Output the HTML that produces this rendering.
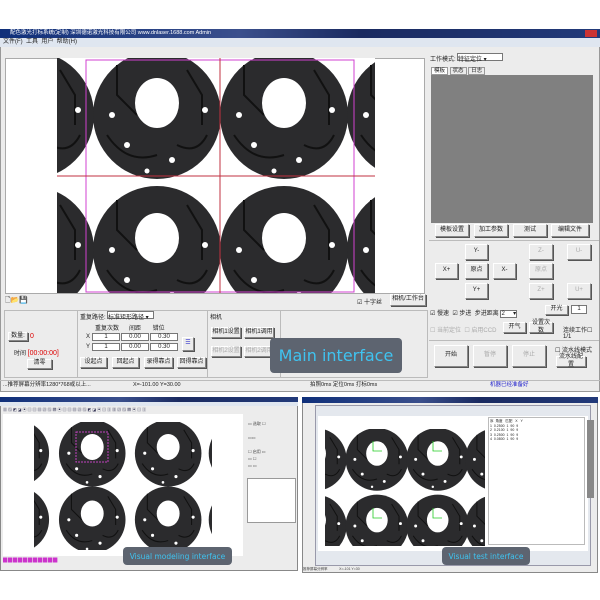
<!DOCTYPE html>
<html><head><meta charset="utf-8">
<style>
*{box-sizing:border-box;margin:0;padding:0}
body{width:600px;height:600px;background:#fff;position:relative;overflow:hidden;font-family:"Liberation Sans","Noto Sans CJK SC",sans-serif;font-size:6px;color:#222}
.a{position:absolute}
.btn{position:absolute;background:#ececec;border:1px solid #888;border-top-color:#fff;border-left-color:#fff;box-shadow:1px 1px 0 #555;font-size:6px;text-align:center;line-height:1.2;display:flex;align-items:center;justify-content:center}
.dis{color:#aaa}
.inp{position:absolute;background:#fff;border:1px solid #777;font-size:6px;text-align:center}
.title{background:linear-gradient(90deg,#0f2f7a,#3a4f8c 40%,#1a2a60 60%,#223a7a);color:#fff}
.lab{position:absolute;background:#5d6470;border-radius:4px;color:#3fc3f0;display:flex;align-items:center;justify-content:center;font-family:"DejaVu Sans",sans-serif}
</style></head><body>
<svg width="0" height="0" style="position:absolute">
<defs>
<g id="d">
<circle r="64" fill="#2b2b2d"/>
<path d="M-40,-50 L-40,-20 L-20,0 M30,-45 L45,-20 L45,10 M-50,20 Q-30,50 0,40 M20,30 Q40,40 50,20" stroke="#111" stroke-width="2" fill="none"/>
<ellipse cx="0" cy="-12" rx="22" ry="25" fill="#fff"/>
<circle cx="-45" cy="0" r="3" fill="#fff"/><circle cx="48" cy="-5" r="3" fill="#fff"/>
<circle cx="-30" cy="30" r="3" fill="#fff"/><circle cx="15" cy="45" r="3" fill="#fff"/><circle cx="-10" cy="56" r="2.5" fill="#fff"/>
</g>
</defs></svg>

<!-- Main window -->
<div class="a" style="left:0;top:29px;width:600px;height:363px;background:#ececec;border:1px solid #999"></div>
<div class="a title" style="left:0;top:29px;width:600px;height:9px;font-size:5.5px;line-height:9px;padding-left:10px">配色激光打标系统(定制) 深圳德诺激光科技有限公司 www.dnlaser.1688.com Admin</div>
<div class="a" style="left:585px;top:30px;width:12px;height:7px;background:#c33"></div>
<div class="a" style="left:0;top:38px;width:600px;height:9px;background:#dfe6f0;font-size:6px;line-height:9px;padding-left:3px">文件(F)&nbsp;&nbsp;工具&nbsp;&nbsp;用户&nbsp;&nbsp;帮助(H)</div>
<div class="a" style="left:5px;top:58px;width:420px;height:236px;background:#fff;border:1px solid #aaa"></div>
<svg class="a" style="left:57px;top:58px" width="318" height="235" viewBox="0 0 318 235">
<rect width="318" height="235" fill="#fff"/>
<use href="#d" x="-27" y="57"/><use href="#d" x="100" y="57"/><use href="#d" x="227" y="57"/><use href="#d" x="354" y="57"/>
<use href="#d" x="-27" y="192"/><use href="#d" x="100" y="192"/><use href="#d" x="227" y="192"/><use href="#d" x="354" y="192"/>
<rect x="29" y="2" width="268" height="232" fill="none" stroke="#d040d0" stroke-width="1"/>
<line x1="0" y1="118" x2="318" y2="118" stroke="#c03040"/><line x1="163" y1="0" x2="163" y2="235" stroke="#c03040"/>
</svg>
<div class="a" style="left:5px;top:296px;width:30px;height:8px;font-size:7px">🗋📂💾</div>
<div class="a" style="left:357px;top:297px">☑ 十字丝</div>
<div class="btn" style="left:390px;top:294px;width:36px;height:12px">相机/工作台</div>
<div class="a" style="left:4px;top:310px;width:424px;height:68px;border:1px solid #bbb"></div>
<div class="a" style="left:77px;top:310px;width:1px;height:68px;background:#bbb"></div>
<div class="a" style="left:207px;top:310px;width:1px;height:68px;background:#bbb"></div>
<div class="a" style="left:280px;top:310px;width:1px;height:68px;background:#bbb"></div>
<div class="btn" style="left:8px;top:332px;width:20px;height:9px">数量:</div><div class="a" style="left:30px;top:333px;color:#d00;font-size:7px">0</div>
<div class="a" style="left:14px;top:348px">时间 <span style="color:#d00;font-size:7px">[00:00:00]</span></div>
<div class="btn" style="left:27px;top:359px;width:25px;height:10px">清零</div>
<div class="a" style="left:80px;top:312px">重复路径:</div><div class="inp" style="left:107px;top:311px;width:47px;height:8px;text-align:left">标准矩形路径 ▾</div>
<div class="a" style="left:95px;top:323px">重复次数&nbsp;&nbsp;&nbsp;&nbsp;&nbsp;&nbsp;间距&nbsp;&nbsp;&nbsp;&nbsp;&nbsp;&nbsp;&nbsp;错位</div>
<div class="a" style="left:86px;top:334px">X</div><div class="a" style="left:86px;top:344px">Y</div>
<div class="inp" style="left:92px;top:333px;width:28px;height:8px">1</div><div class="inp" style="left:121px;top:333px;width:28px;height:8px">0.00</div><div class="inp" style="left:150px;top:333px;width:28px;height:8px">0.30</div>
<div class="inp" style="left:92px;top:343px;width:28px;height:8px">1</div><div class="inp" style="left:121px;top:343px;width:28px;height:8px">0.00</div><div class="inp" style="left:150px;top:343px;width:28px;height:8px">0.30</div>
<div class="btn" style="left:182px;top:337px;width:12px;height:14px;color:#33c">☰</div>
<div class="btn" style="left:80px;top:357px;width:27px;height:11px">设起点</div><div class="btn" style="left:112px;top:357px;width:27px;height:11px">回起点</div><div class="btn" style="left:144px;top:357px;width:29px;height:11px">录得靠点</div><div class="btn" style="left:177px;top:357px;width:29px;height:11px">回得靠点</div>
<div class="a" style="left:210px;top:312px">相机</div>
<div class="btn" style="left:211px;top:327px;width:30px;height:11px">相机1设置</div><div class="btn" style="left:244px;top:327px;width:30px;height:11px">相机1调用</div>
<div class="btn dis" style="left:211px;top:346px;width:30px;height:11px">相机2设置</div><div class="btn dis" style="left:244px;top:346px;width:30px;height:11px">相机2调用</div>
<div class="a" style="left:0;top:380px;width:600px;height:10px;border-top:1px solid #bbb;font-size:5.5px;line-height:9px">
<span class="a" style="left:3px">...推荐屏幕分辨率1280*768或以上...</span><span class="a" style="left:133px">X=-101.00 Y=30.00</span><span class="a" style="left:310px">拍照0ms 定位0ms 打标0ms</span><span class="a" style="left:490px;color:#22c">机器已经准备好</span></div>
<!-- right panel -->
<div class="a" style="left:430px;top:54px">工作模式:</div><div class="inp" style="left:457px;top:53px;width:46px;height:8px;text-align:left">特征定位 ▾</div>
<div class="a" style="left:431px;top:66px;width:120px;height:9px;font-size:5.5px"><span style="border:1px solid #999;background:#fff;padding:0 2px">模板</span> <span style="border:1px solid #999;padding:0 2px">状态</span> <span style="border:1px solid #999;padding:0 2px">日志</span></div>
<div class="a" style="left:431px;top:75px;width:162px;height:148px;background:#808080"></div>
<div class="btn" style="left:435px;top:224px;width:34px;height:13px">模板设置</div><div class="btn" style="left:474px;top:224px;width:34px;height:13px">加工参数</div><div class="btn" style="left:513px;top:224px;width:34px;height:13px">测试</div><div class="btn" style="left:551px;top:224px;width:38px;height:13px">编辑文件</div>
<div class="a" style="left:429px;top:240px;width:170px;height:1px;background:#bbb"></div>
<div class="btn" style="left:465px;top:244px;width:23px;height:16px">Y-</div>
<div class="btn" style="left:435px;top:263px;width:23px;height:16px">X+</div><div class="btn" style="left:465px;top:263px;width:23px;height:16px">原点</div><div class="btn" style="left:493px;top:263px;width:23px;height:16px">X-</div>
<div class="btn" style="left:465px;top:283px;width:23px;height:16px">Y+</div>
<div class="btn dis" style="left:529px;top:244px;width:24px;height:16px">Z-</div><div class="btn dis" style="left:529px;top:263px;width:24px;height:16px">原点</div><div class="btn dis" style="left:529px;top:283px;width:24px;height:16px">Z+</div>
<div class="btn dis" style="left:567px;top:244px;width:24px;height:16px">U-</div><div class="btn dis" style="left:567px;top:283px;width:24px;height:16px">U+</div>
<div class="a" style="left:430px;top:308px">☑ 慢速&nbsp;&nbsp;☑ 步进&nbsp;&nbsp;步进距离 <span style="background:#fff;border:1px solid #777">2&nbsp;&nbsp;&nbsp;&nbsp;&nbsp;▾</span></div>
<div class="btn" style="left:545px;top:305px;width:23px;height:10px">开光</div><div class="inp" style="left:571px;top:305px;width:16px;height:9px">1</div>
<div class="a dis" style="left:430px;top:325px">☐ 当前定位&nbsp;&nbsp;☐ 启用CCD</div>
<div class="btn" style="left:503px;top:322px;width:23px;height:11px">开气</div><div class="btn" style="left:529px;top:322px;width:24px;height:11px">设置次数</div>
<div class="a" style="left:563px;top:325px">连续工作☐<br>1/1</div>
<div class="a" style="left:429px;top:340px;width:170px;height:1px;background:#bbb"></div>
<div class="btn" style="left:434px;top:345px;width:34px;height:22px">开始</div><div class="btn dis" style="left:473px;top:345px;width:34px;height:22px">暂停</div><div class="btn dis" style="left:512px;top:345px;width:34px;height:22px">停止</div>
<div class="a" style="left:555px;top:345px">☐ 流水线模式</div><div class="btn" style="left:556px;top:356px;width:30px;height:11px">流水线配置</div>
<div class="lab" style="left:270px;top:338px;width:132px;height:35px;font-size:16px">Main interface</div>

<!-- modeling window -->
<div class="a" style="left:0;top:397px;width:298px;height:174px;background:#ececec;border:1px solid #888"></div>
<div class="a title" style="left:0;top:397px;width:298px;height:5px"></div>
<div class="a" style="left:0;top:402px;width:298px;height:4px;background:#dfe6f0"></div>
<div class="a" style="left:3px;top:407px;width:220px;height:5px;font-size:4px;letter-spacing:1px;color:#335">▦▨◩◪▣▤▥▦▧▨▩▣▤▥▦▧▨◩◪▣▤▥▦▧▨▩▣▤▥</div>
<div class="a" style="left:3px;top:414px;width:240px;height:142px;background:#fff"></div>
<svg class="a" style="left:34px;top:422px" width="178" height="128" viewBox="0 0 178 128">
<rect width="178" height="128" fill="#fff"/>
<g transform="scale(0.52)"><use href="#d" x="-35" y="60"/><use href="#d" x="112" y="60"/><use href="#d" x="258" y="60"/><use href="#d" x="400" y="60"/>
<use href="#d" x="-35" y="188"/><use href="#d" x="112" y="188"/><use href="#d" x="258" y="188"/><use href="#d" x="400" y="188"/></g>
<rect x="42" y="10" width="32" height="30" fill="none" stroke="#c040c0" stroke-dasharray="2,1"/>
</svg>
<div class="a" style="left:248px;top:420px;width:48px;height:145px;font-size:4px;color:#444;line-height:7px">▭ 选取 ☐<br><br>▭▭<br><br>☐ 启用 ▭<br>▭ ☐<br>▭ ▭<br><br>▭▭▭▭</div>
<div class="a" style="left:247px;top:478px;width:49px;height:45px;background:#fff;border:1px solid #999"></div>
<div class="a" style="left:3px;top:557px;width:100px;height:6px;font-size:5px;color:#c3c">▉▉▉▉▉▉▉▉▉▉▉</div>
<div class="lab" style="left:123px;top:547px;width:109px;height:18px;font-size:7.5px">Visual modeling interface</div>

<!-- test window -->
<div class="a" style="left:302px;top:397px;width:296px;height:176px;background:#ececec;border:1px solid #888"></div>
<div class="a title" style="left:302px;top:397px;width:296px;height:6px"></div>
<div class="a" style="left:315px;top:405px;width:276px;height:161px;background:#e4e8ee;border:1px solid #99a"></div>
<div class="a" style="left:318px;top:416px;width:270px;height:135px;background:#fff"></div>
<svg class="a" style="left:325px;top:429px" width="160" height="117" viewBox="0 0 160 117">
<rect width="160" height="117" fill="#fff"/>
<g transform="scale(0.49)"><use href="#d" x="-20" y="62"/><use href="#d" x="106" y="62"/><use href="#d" x="230" y="62"/><use href="#d" x="350" y="62"/>
<use href="#d" x="-20" y="198"/><use href="#d" x="106" y="198"/><use href="#d" x="230" y="198"/><use href="#d" x="350" y="198"/></g>
<g stroke="#2c2" stroke-width="0.8" fill="none"><path d="M48,12 V22 H57"/><path d="M108,12 V22 H117"/><path d="M48,79 V89 H57"/><path d="M108,79 V89 H117"/></g>
</svg>
<div class="a" style="left:488px;top:417px;width:97px;height:128px;background:#fff;border:1px solid #bbb;font-size:3.5px;line-height:4.5px;padding:1px">序 &nbsp;角度 &nbsp;&nbsp;匹配 &nbsp;&nbsp;X &nbsp;&nbsp;Y<br>1 &nbsp;0.2500 &nbsp;1 &nbsp;90 &nbsp;9<br>2 &nbsp;0.2100 &nbsp;1 &nbsp;90 &nbsp;9<br>3 &nbsp;0.2500 &nbsp;1 &nbsp;90 &nbsp;9<br>4 &nbsp;0.0800 &nbsp;1 &nbsp;90 &nbsp;9</div>
<div class="a" style="left:587px;top:420px;width:7px;height:78px;background:#888"></div>
<div class="a" style="left:302px;top:567px;width:296px;height:5px;font-size:3.5px;color:#444">&nbsp;推荐屏幕分辨率 &nbsp;&nbsp;&nbsp;&nbsp;&nbsp;&nbsp;&nbsp;&nbsp;&nbsp;&nbsp;&nbsp;X=-101 Y=30</div>
<div class="lab" style="left:442px;top:547px;width:88px;height:18px;font-size:7.5px">Visual test interface</div>
</body></html>
